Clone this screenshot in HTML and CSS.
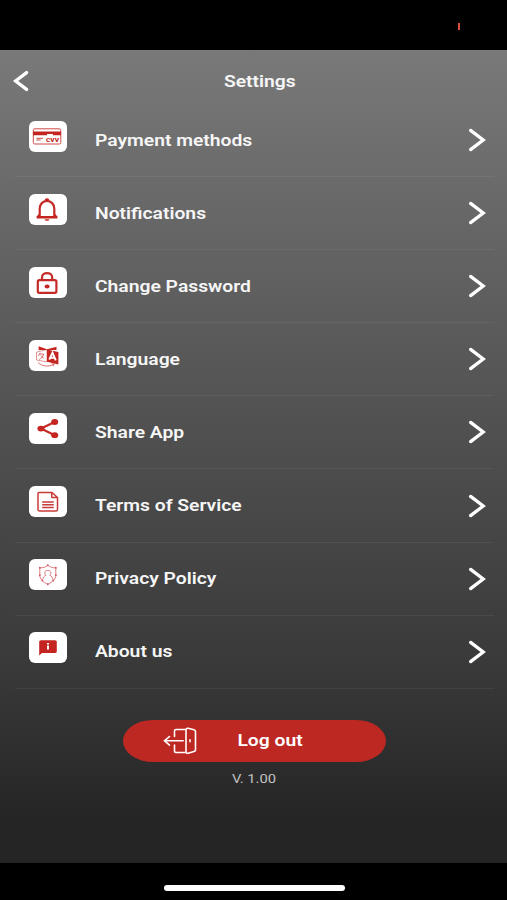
FILE: index.html
```
<!DOCTYPE html>
<html lang="en">
<head>
    <meta charset="UTF-8">
    <meta name="viewport" content="width=device-width, initial-scale=1.0">
    <title>Settings</title>
    <link rel="stylesheet" href="styles.css">
</head>
<body>
    <div class="status-bar"><span class="rec-mark"></span></div>

    <main class="screen">
        <header class="top-bar">
            <svg class="back" width="18" height="24" viewBox="0 0 18 24"><path d="M14.6 3.6 3.6 12l11 8.4"/></svg>
            <h1><span class="wide">Settings</span></h1>
        </header>

        <ul class="menu">
            <li class="menu-item">
                <span class="tile">
                    <svg width="38" height="31" viewBox="0 0 38 31">
                        <rect class="thin" x="4.3" y="7.8" width="27.5" height="15.2" rx="1.5"/>
                        <path class="fill" d="M4 10.5h28v3.7H4z"/>
                        <path fill="#fff" d="M18 13h6v2.3h-6z"/>
                        <path class="thin" d="M7.5 17.3h6.5M7.5 19h4"/>
                        <text class="cvv" x="17" y="21.4" textLength="13" lengthAdjust="spacingAndGlyphs">CVV</text>
                    </svg>
                </span>
                <span class="label"><span class="wide">Payment methods</span></span>
                <svg class="chevron" width="20" height="26" viewBox="0 0 20 26"><path d="M3.6 3.4 16.2 13 3.6 22.6"/></svg>
            </li>
            <li class="menu-item">
                <span class="tile">
                    <svg width="38" height="31" viewBox="0 0 38 31">
                        <path class="line" d="M10.7 23.3V14.5a7.3 7.6 0 0 1 14.6 0v8.8"/>
                        <path class="fill" d="M7.6 22h20.8v2.5H7.6zM15.6 25.2h4.8c-.5 2-4.3 2-4.8 0zM15.7 6.5c0-3 4.6-3 4.6 0z"/>
                        <path class="fill" d="m9.8 20-2.2 2.6h4zM26.2 20l2.2 2.6h-4z"/>
                    </svg>
                </span>
                <span class="label"><span class="wide">Notifications</span></span>
                <svg class="chevron" width="20" height="26" viewBox="0 0 20 26"><path d="M3.6 3.4 16.2 13 3.6 22.6"/></svg>
            </li>
            <li class="menu-item">
                <span class="tile">
                    <svg width="38" height="31" viewBox="0 0 38 31">
                        <rect class="line" x="8.8" y="13.2" width="18.6" height="12.6" rx="1.5"/>
                        <path class="line" d="M13 13v-2.6c0-5.8 10.2-5.8 10.2 0V13"/>
                        <ellipse class="fill" cx="18.1" cy="19.5" rx="2.5" ry="2.1"/>
                    </svg>
                </span>
                <span class="label"><span class="wide">Change Password</span></span>
                <svg class="chevron" width="20" height="26" viewBox="0 0 20 26"><path d="M3.6 3.4 16.2 13 3.6 22.6"/></svg>
            </li>
            <li class="menu-item">
                <span class="tile">
                    <svg width="38" height="31" viewBox="0 0 38 31">
                        <path class="fill" d="M9.6 6.2 18 9.3l9.5-2.6v3.2H9.6z"/>
                        <path fill="#fff" stroke="#c42a26" stroke-width=".5" d="m7.5 12.2 10.5-2.7v12.4L7.5 20z"/>
                        <path class="fill" d="m18 9.5 11.4 2.6v12.4L18 21.8z"/>
                        <path class="hair" d="M11.2 12.8 9.5 16M10.7 14h4c-.5 2.2-2.2 4.3-4.5 5.5M12 15.4l2.7 3.2"/>
                        <path stroke="#fff" stroke-width="1.9" fill="none" d="m20.3 19.7 3.2-7 3.3 7.7M21.4 17.7h4.4"/>
                        <path class="hair" d="M9 22.5c4 4 11 4.500 15.500 2M22.500 23.700l2.700.4-1 2"/>
                    </svg>
                </span>
                <span class="label"><span class="wide">Language</span></span>
                <svg class="chevron" width="20" height="26" viewBox="0 0 20 26"><path d="M3.6 3.4 16.2 13 3.6 22.6"/></svg>
            </li>
            <li class="menu-item">
                <span class="tile">
                    <svg width="38" height="31" viewBox="0 0 38 31">
                        <path class="line" d="M25.7 9 12 15.6l13.7 6.6"/>
                        <ellipse class="fill" cx="25.7" cy="9" rx="3.5" ry="2.9"/>
                        <ellipse class="fill" cx="11.9" cy="15.6" rx="3.5" ry="2.9"/>
                        <ellipse class="fill" cx="25.7" cy="22.2" rx="3.5" ry="2.9"/>
                    </svg>
                </span>
                <span class="label"><span class="wide">Share App</span></span>
                <svg class="chevron" width="20" height="26" viewBox="0 0 20 26"><path d="M3.6 3.4 16.2 13 3.6 22.6"/></svg>
            </li>
            <li class="menu-item">
                <span class="tile">
                    <svg width="38" height="31" viewBox="0 0 38 31">
                        <path class="doc" d="M10 6.5h13l5.500 5v12a1.400 1.400 0 0 1-1.400 1.400H10.400A1.400 1.400 0 0 1 9 23.500V7.500a1 1 0 0 1 1-1zM22.700 6.500v4.200a.8.8 0 0 0 .8.8h5M13.200 15.900h11.500M13.200 18.700h11.500M13.200 21.500h11.500"/>
                    </svg>
                </span>
                <span class="label"><span class="wide">Terms of Service</span></span>
                <svg class="chevron" width="20" height="26" viewBox="0 0 20 26"><path d="M3.6 3.4 16.2 13 3.6 22.6"/></svg>
            </li>
            <li class="menu-item">
                <span class="tile">
                    <svg width="38" height="31" viewBox="0 0 38 31">
                        <path class="pale" d="M18.800 6.300c-2.300 2-5 2.700-8 2.500v7.400c0 4 3.500 7 8 9 4.500-2 8-5 8-9V8.800c-3 .2-5.700-.5-8-2.500z"/>
                        <path class="pale" d="M13.800 20.600c.3-2.500 1.300-3.600 3-4.200-1.700-1.900-1.300-5 2-5s3.700 3.100 2 5c1.700.6 2.700 1.700 3 4.200"/>
                        <path class="dots" d="M18.800 6.300h0M10.800 8.800h0M26.800 8.800h0M10.800 16.200h0M26.800 16.200h0M18.800 25.200h0M13.300 21.500h0M24.300 21.500h0"/>
                    </svg>
                </span>
                <span class="label"><span class="wide">Privacy Policy</span></span>
                <svg class="chevron" width="20" height="26" viewBox="0 0 20 26"><path d="M3.6 3.4 16.2 13 3.6 22.6"/></svg>
            </li>
            <li class="menu-item">
                <span class="tile">
                    <svg width="38" height="31" viewBox="0 0 38 31">
                        <path class="fill" d="M12 8.300h14a1.800 1.500 0 0 1 1.800 1.500v9.700A1.800 1.500 0 0 1 26 21H13l-2.800 2.500V9.800A1.800 1.500 0 0 1 12 8.300z"/>
                        <path fill="#fff" d="M18 11h2v1.600h-2zM18 13.600h2v4h-2z"/>
                    </svg>
                </span>
                <span class="label"><span class="wide">About us</span></span>
                <svg class="chevron" width="20" height="26" viewBox="0 0 20 26"><path d="M3.6 3.4 16.2 13 3.6 22.6"/></svg>
            </li>
        </ul>

        <div class="footer">
            <button class="logout" type="button">
                <svg width="36" height="30" viewBox="0 0 36 30">
                    <path d="M12.500 10.500V5a1.500 1.500 0 0 1 1.500-1.500h9M12.500 19v6a1.500 1.500 0 0 0 1.500 1.500h9M7.500 10.500l-5 4.300 5 4.300M2.500 14.800h18.700"/>
                    <path d="M24 4.200v21.600q0 1.800 2 1.400l6-1.600q1.500-.4 1.500-1.800V5.500q0-1.300-1.500-1.700l-6-1.500q-2-.4-2 1.900z"/>
                    <path d="M28 13.800v2"/>
                </svg>
                <span class="wide">Log out</span>
            </button>
            <p class="version"><span class="wide">V. 1.00</span></p>
        </div>
    </main>

    <div class="home-bar"><span class="home-indicator"></span></div>
</body>
</html>
```
FILE: styles.css
```
* {
    box-sizing: border-box;
}

body {
    margin: 0;
    height: 900px;
    display: flex;
    flex-direction: column;
    background: #000;
    color: #f6f6f6;
    font-family: Roboto, sans-serif;
    overflow: hidden;
}

.status-bar {
    height: 49.5px;
    display: flex;
    justify-content: flex-end;
    padding: 23px 47px 0 0;
}

.rec-mark {
    width: 2px;
    height: 7px;
    background: #d8503f;
}

.screen {
    height: 813px;
    background: linear-gradient(#797979 0%, #717171 9%, #505050 47%, #393939 76%, #252525 95%, #252525 100%);
}

.top-bar {
    height: 54.5px;
    display: flex;
    align-items: center;
    padding: 9px 0 0 12px;
}

.top-bar h1 {
    flex: 1;
    margin: 0 17px 0 0;
    text-align: center;
    font-size: 16px;
    font-weight: 600;
}

svg {
    display: block;
    fill: none;
}

.back,
.chevron {
    stroke: #fff;
    stroke-width: 3.3;
    stroke-linecap: round;
}

/* labels use a stretched Roboto */
.wide {
    display: inline-block;
    transform: scaleX(1.205);
}

.menu {
    list-style: none;
    margin: 0;
    padding: 0 13px 0 15px;
}

.menu-item {
    height: 73.1px;
    display: flex;
    align-items: center;
    padding: 0 7px 0 14.3px;
    border-bottom: 1px solid rgba(255, 255, 255, 0.06);
}

.tile {
    width: 38px;
    height: 31px;
    margin-bottom: 8px;
    border-radius: 6px;
    background: #fff;
    overflow: hidden;
}

.label {
    flex: 1;
    margin-left: 28px;
    font-size: 16px;
    font-weight: 600;
    white-space: nowrap;
}

.label .wide {
    transform-origin: left;
}

.tile .line {
    stroke: #c42a26;
    stroke-width: 2.2;
}

.tile .doc {
    stroke: #c83c38;
    stroke-width: 1.5;
}

.tile .thin {
    stroke: #cf4a48;
    stroke-width: 1;
}

.tile .hair {
    stroke: #cf4a48;
    stroke-width: 0.8;
}

.tile .pale {
    stroke: #dc7c84;
    stroke-width: 1;
}

.tile .dots {
    stroke: #cf5a62;
    stroke-width: 1.9;
    stroke-linecap: round;
}

.tile .fill {
    fill: #c42521;
}

.cvv {
    fill: #c42521;
    font-size: 6px;
    font-weight: 900;
}

.footer {
    display: flex;
    flex-direction: column;
    align-items: center;
    padding: 30.8px 0 0 1px;
}

.logout {
    width: 263px;
    height: 42px;
    display: flex;
    align-items: center;
    gap: 45px;
    padding: 0 0 0 39.5px;
    border: 0;
    border-radius: 30px / 21px;
    background: #be2822;
    color: #fff;
    font-family: inherit;
    font-size: 16px;
    font-weight: 600;
}

.logout svg {
    stroke: #fff;
    stroke-width: 1.6;
    stroke-linecap: round;
}

.version {
    margin: 10.2px 0 0;
    color: #c0c0c0;
    font-size: 12px;
    line-height: 15px;
}

.version .wide {
    transform: scaleX(1.23);
}

.home-bar {
    flex: 1;
    display: flex;
    justify-content: center;
    padding: 22.5px 0 0 1px;
}

.home-indicator {
    width: 181px;
    height: 6px;
    border-radius: 3px;
    background: #fff;
}
```
